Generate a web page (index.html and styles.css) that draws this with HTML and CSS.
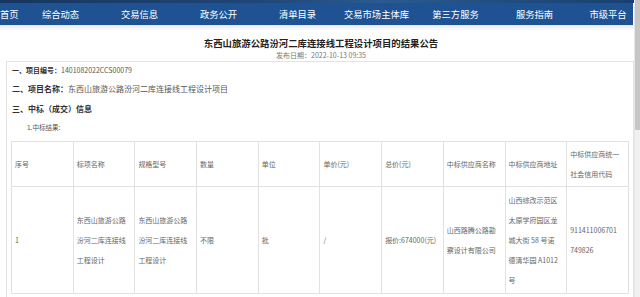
FILE: index.html
```html
<!DOCTYPE html>
<html lang="zh-CN">
<head>
<meta charset="utf-8">
<title>结果公告</title>
<link rel="stylesheet" href="styles.css">
</head>
<body>
<div class="window">
  <div class="page">
    <div class="banner"></div>
    <nav class="nav">
      <a class="nav-item first">首页</a>
      <a class="nav-item">综合动态</a>
      <a class="nav-item">交易信息</a>
      <a class="nav-item">政务公开</a>
      <a class="nav-item">清单目录</a>
      <a class="nav-item">交易市场主体库</a>
      <a class="nav-item">第三方服务</a>
      <a class="nav-item">服务指南</a>
      <a class="nav-item last">市级平台</a>
    </nav>
    <div class="shade"></div>
    <main class="article">
      <h1 class="title">东西山旅游公路汾河二库连接线工程设计项目的结果公告</h1>
      <div class="date">发布日期：2022-10-13 09:35</div>
      <section class="box">
        <p class="sec sec-small"><b>一、项目编号：</b>1401082022CCS00079</p>
        <p class="sec sec-name"><b>二、项目名称：</b>东西山旅游公路汾河二库连接线工程设计项目</p>
        <p class="sec sec-info"><b>三、中标（成交）信息</b></p>
        <p class="sub">1.中标结果:</p>
        <table class="result">
          <thead>
            <tr>
              <th>序号</th>
              <th>标项名称</th>
              <th>规格型号</th>
              <th>数量</th>
              <th>单位</th>
              <th>单价(元)</th>
              <th>总价(元)</th>
              <th>中标供应商名称</th>
              <th>中标供应商地址</th>
              <th>中标供应商统一<br>社会信用代码</th>
            </tr>
          </thead>
          <tbody>
            <tr>
              <td>1</td>
              <td>东西山旅游公路<br>汾河二库连接线<br>工程设计</td>
              <td>东西山旅游公路<br>汾河二库连接线<br>工程设计</td>
              <td>不限</td>
              <td>批</td>
              <td>/</td>
              <td>报价:674000(元)</td>
              <td>山西路腾公路勘<br>察设计有限公司</td>
              <td>山西综改示范区<br>太原学府园区龙<br>城大街 58 号诺<br>德清华园 A1012<br>号</td>
              <td>911411006701<br>749826</td>
            </tr>
          </tbody>
        </table>
        <p class="sub">2.废标结果:</p>
      </section>
    </main>
  </div>
  <div class="scrollbar"><div class="thumb"></div></div>
</div>
</body>
</html>
```

FILE: styles.css
```css
html, body {
  margin: 0;
  padding: 0;
  overflow: hidden;
  background: #ffffff;
}

body {
  font-family: "Noto Sans CJK SC", "Microsoft YaHei", sans-serif;
  color: #333;
}

.window {
  display: flex;
  width: 640px;
  height: 297px;
  overflow: hidden;
}

.page {
  width: 634px;
  flex: none;
}

.banner {
  height: 3px;
  background: linear-gradient(90deg, #16365f, #1f4677 40%, #2a5a8f 60%, #17406f);
}

.nav {
  display: flex;
  height: 22px;
  width: 633px;
  background: #1e5292;
  align-items: center;
  font-size: 9.3px;
  line-height: 22px;
  color: #ffffff;
}

.nav-item {
  flex: none;
  width: 79px;
  text-align: center;
  color: #ffffff;
  text-decoration: none;
  white-space: nowrap;
}

.nav-item.first {
  width: 21px;
  text-align: left;
}

.nav-item.last {
  width: 68px;
}

.shade {
  height: 6px;
  background: linear-gradient(180deg, #e6e9ee, #ffffff);
}

.article {
  display: block;
}

.title {
  margin: 0;
  padding: 5px 0 0 8px;
  height: 14px;
  line-height: 14px;
  font-size: 9.4px;
  font-weight: bold;
  color: #222;
  text-align: center;
}

.date {
  padding-left: 8px;
  height: 11px;
  line-height: 11px;
  font-size: 7px;
  color: #777;
  text-align: center;
}

.box {
  margin-left: 6px;
  border: 1px solid #e3e3e3;
  border-bottom: none;
  padding: 0 4px 0 4px;
  height: 300px;
}

.sec {
  margin: 0;
  padding-left: 1px;
  color: #555;
  white-space: nowrap;
}

.sec b {
  color: #333;
  font-weight: bold;
}

.sec-small {
  height: 17px;
  line-height: 17px;
  font-size: 7px;
}

.sec-name {
  height: 20px;
  line-height: 20px;
  font-size: 8px;
}

.sec-info {
  height: 19px;
  line-height: 19px;
  font-size: 8px;
}

.sub {
  margin: 0;
  padding-left: 16px;
  height: 18px;
  line-height: 18px;
  font-size: 6.5px;
  color: #555;
}

.result {
  margin-top: 5px;
  width: 618px;
  table-layout: fixed;
  border-collapse: collapse;
  font-size: 7px;
  color: #666;
}

.result th,
.result td {
  border: 1px solid #e2e2e2;
  padding: 2px 3px;
  line-height: 20px;
  text-align: left;
  font-weight: normal;
  vertical-align: middle;
  white-space: nowrap;
  overflow: hidden;
}

.result thead tr {
  height: 45px;
}

.result tbody tr {
  height: 107px;
}

.scrollbar {
  width: 6px;
  flex: none;
  background: #f0f0f0;
  border-left: 1px solid #e8e8e8;
  box-sizing: border-box;
}

.thumb {
  height: 130px;
  background: #c6c6c6;
}
```
